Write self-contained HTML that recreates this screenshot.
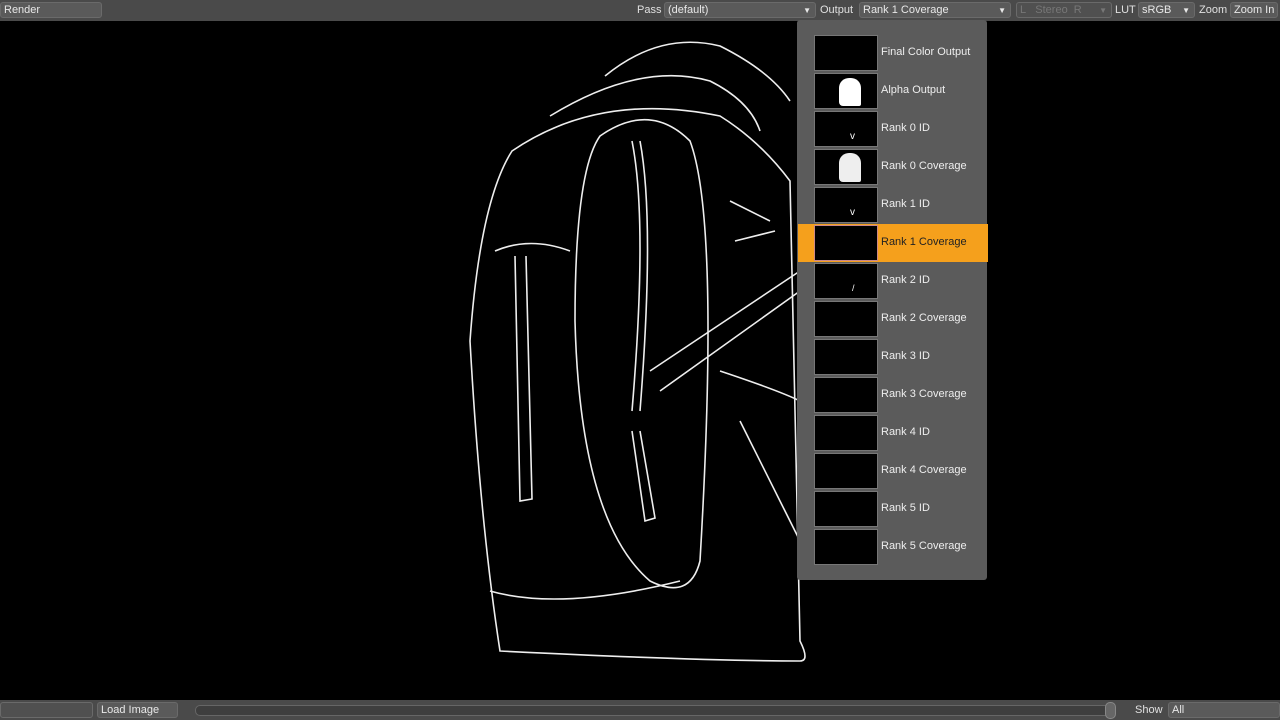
<!DOCTYPE html><html><head><style>
body{margin:0;width:1280px;height:720px;background:#000;overflow:hidden;position:relative;font-family:"Liberation Sans",sans-serif;font-size:11px;color:#ddd;white-space:nowrap}
.bar{position:absolute;left:0;width:1280px;background:#4a4a4a}
.btn{position:absolute;height:16px;line-height:15px;background:#5a5a5a;border:1px solid #6a6a6a;border-radius:3px;padding-left:3px;box-sizing:border-box;color:#e8e8e8;overflow:hidden}
.lbl{position:absolute;line-height:16px;color:#e0e0e0}
.arr{position:absolute;right:4px;top:0;font-size:8px}
#menu{position:absolute;left:797px;top:20px;width:190px;height:560px;background:#5b5b5b;border-radius:3px}
.row{position:absolute;left:1px;width:190px;height:38px}
.th{position:absolute;left:16px;top:1px;width:64px;height:36px;background:#000;border:1px solid #777;box-sizing:border-box}
.t{position:absolute;left:83px;top:12px;color:#eee}
</style></head><body>
<div class="bar" style="top:0;height:21px"></div>
<div class="btn" style="left:0;top:2px;width:102px">Render</div>
<div class="lbl" style="left:637px;top:2px">Pass</div>
<div class="btn" style="left:664px;top:2px;width:152px">(default)<span class="arr">▼</span></div>
<div class="lbl" style="left:820px;top:2px">Output</div>
<div class="btn" style="left:859px;top:2px;width:152px">Rank 1 Coverage<span class="arr">▼</span></div>
<div class="btn" style="left:1016px;top:2px;width:96px;color:#777;background:#505050">L&nbsp;&nbsp; Stereo &nbsp;R <span class="arr">▼</span></div>
<div class="lbl" style="left:1115px;top:2px">LUT</div>
<div class="btn" style="left:1138px;top:2px;width:57px">sRGB<span class="arr">▼</span></div>
<div class="lbl" style="left:1199px;top:2px">Zoom</div>
<div class="btn" style="left:1230px;top:2px;width:48px">Zoom In</div>
<div class="bar" style="top:700px;height:20px"></div>
<div class="btn" style="left:0;top:702px;width:93px;background:#505050"></div>
<div class="btn" style="left:97px;top:702px;width:81px">Load Image</div>
<div style="position:absolute;left:195px;top:705px;width:915px;height:9px;border:1px solid #666;border-radius:5px;background:#3e3e3e"></div>
<div style="position:absolute;left:1105px;top:702px;width:9px;height:15px;border-radius:5px;background:#666;border:1px solid #888"></div>
<div class="lbl" style="left:1135px;top:702px">Show</div>
<div class="btn" style="left:1168px;top:702px;width:112px">All</div>
<svg style="position:absolute;left:0;top:21px" width="1280" height="679" fill="none" stroke="#eee" stroke-width="1.6">
<path d="M512 130 Q600 70 720 95 Q760 120 790 160 L800 620 Q810 640 800 640 Q700 640 500 630 Q480 500 470 320 Q480 180 512 130Z"/>
<path d="M550 95 Q640 40 710 60 Q750 80 760 110"/>
<path d="M605 55 Q660 10 720 25 Q770 50 790 80"/>
<path d="M600 115 Q650 80 690 120 Q720 200 700 540 Q690 580 650 560 Q580 500 575 300 Q575 150 600 115Z"/>
<path d="M490 570 Q560 590 680 560"/>
<path d="M495 230 Q530 215 570 230"/>
<path d="M515 235 L520 480 L532 478 L526 235"/>
<path d="M640 120 Q655 200 640 390 M632 120 Q648 200 632 390"/>
<path d="M632 410 L645 500 L655 497 L640 410"/>
<path d="M650 350 L800 250 M660 370 L800 270"/>
<path d="M730 180 L770 200 M735 220 L775 210 M720 350 Q780 370 800 380"/>
<path d="M740 400 Q780 480 800 520"/>
</svg>
<div id="menu">
<div class="row" style="top:14px"><div class="th"></div><div class="t">Final Color Output</div></div>
<div class="row" style="top:52px"><div class="th"><div style="position:absolute;left:24px;top:4px;width:22px;height:28px;background:#fff;border-radius:10px 10px 2px 4px"></div></div><div class="t">Alpha Output</div></div>
<div class="row" style="top:90px"><div class="th"><span style="position:absolute;left:35px;top:19px;color:#fff;font-size:10px">v</span></div><div class="t">Rank 0 ID</div></div>
<div class="row" style="top:128px"><div class="th"><div style="position:absolute;left:24px;top:3px;width:22px;height:29px;background:#eee;border-radius:10px 10px 2px 4px"></div></div><div class="t">Rank 0 Coverage</div></div>
<div class="row" style="top:166px"><div class="th"><span style="position:absolute;left:35px;top:19px;color:#fff;font-size:10px">v</span></div><div class="t">Rank 1 ID</div></div>
<div class="row" style="top:204px;background:#f5a01c"><div class="th" style="border-color:#c88"></div><div class="t" style="color:#222">Rank 1 Coverage</div></div>
<div class="row" style="top:242px"><div class="th"><span style="position:absolute;left:37px;top:19px;color:#fff;font-size:9px">/</span></div><div class="t">Rank 2 ID</div></div>
<div class="row" style="top:280px"><div class="th"></div><div class="t">Rank 2 Coverage</div></div>
<div class="row" style="top:318px"><div class="th"></div><div class="t">Rank 3 ID</div></div>
<div class="row" style="top:356px"><div class="th"></div><div class="t">Rank 3 Coverage</div></div>
<div class="row" style="top:394px"><div class="th"></div><div class="t">Rank 4 ID</div></div>
<div class="row" style="top:432px"><div class="th"></div><div class="t">Rank 4 Coverage</div></div>
<div class="row" style="top:470px"><div class="th"></div><div class="t">Rank 5 ID</div></div>
<div class="row" style="top:508px"><div class="th"></div><div class="t">Rank 5 Coverage</div></div>
</div>
</body></html>
